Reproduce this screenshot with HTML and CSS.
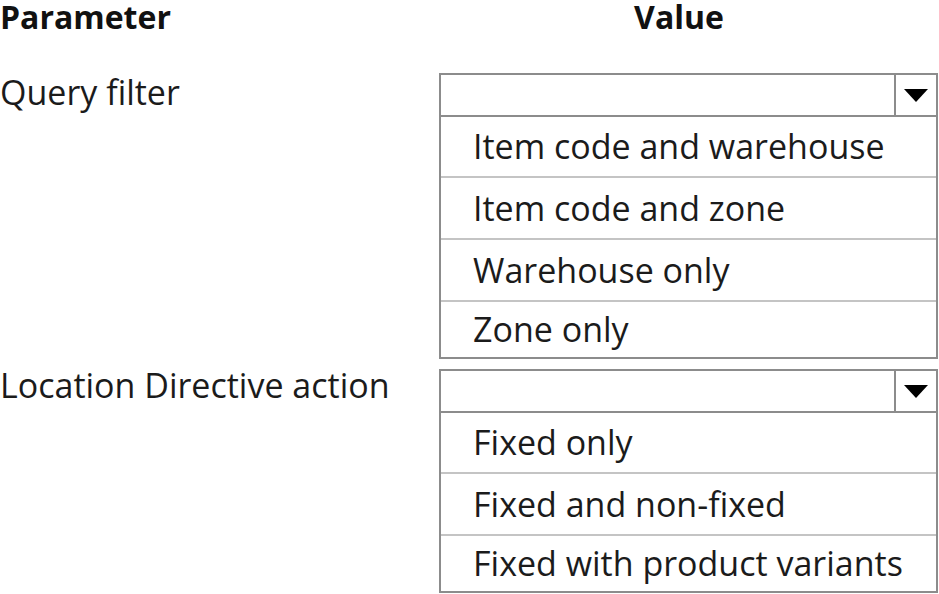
FILE: index.html
```html
<!DOCTYPE html>
<html lang="en">
<head>
    <meta charset="UTF-8">
    <meta name="viewport" content="width=device-width, initial-scale=1.0">
    <title>Parameter values</title>
    <link rel="stylesheet" href="styles.css">
</head>
<body>
    <div class="sheet">
        <div class="head-row">
            <div class="head-param">Parameter</div>
            <div class="head-value">Value</div>
        </div>

        <div class="param-row">
            <div class="param-label">Query filter</div>
            <div class="picker">
                <div class="select">
                    <span class="select-field"></span>
                    <span class="select-btn">
                        <svg width="24" height="13" viewBox="0 0 24 13"><path d="M0 0 H24 L12 13 Z" fill="#000"/></svg>
                    </span>
                </div>
                <ul class="options">
                    <li>Item code and warehouse</li>
                    <li>Item code and zone</li>
                    <li>Warehouse only</li>
                    <li>Zone only</li>
                </ul>
            </div>
        </div>

        <div class="param-row">
            <div class="param-label">Location Directive action</div>
            <div class="picker">
                <div class="select">
                    <span class="select-field"></span>
                    <span class="select-btn">
                        <svg width="24" height="13" viewBox="0 0 24 13"><path d="M0 0 H24 L12 13 Z" fill="#000"/></svg>
                    </span>
                </div>
                <ul class="options">
                    <li>Fixed only</li>
                    <li>Fixed and non-fixed</li>
                    <li>Fixed with product variants</li>
                </ul>
            </div>
        </div>
    </div>
</body>
</html>
```

FILE: styles.css
```css
body {
    margin: 0;
    background: #fff;
    color: #1b1b1b;
    font-family: "Open Sans", "Noto Sans", sans-serif;
}
.sheet {
    width: 939px;
}
.head-row {
    display: grid;
    grid-template-columns: 439px 500px;
    height: 73px;
}
.head-param,
.head-value {
    font-weight: 700;
    font-size: 32px;
    line-height: 40px;
    margin-top: -3px;
    color: #111;
}
.head-value {
    text-align: center;
    padding-right: 20px;
}
.param-row {
    display: grid;
    grid-template-columns: 439px 499px;
    margin-bottom: 10px;
}
.param-label {
    font-size: 34px;
    line-height: 38px;
}
.param-row + .param-row .param-label {
    margin-top: -3px;
}
.picker {
    display: flex;
    flex-direction: column;
}
.select {
    display: flex;
    height: 40px;
    border: 2px solid #8c8c8c;
}
.select-field {
    flex: 1;
}
.select-btn {
    width: 40px;
    border-left: 2px solid #8c8c8c;
    display: flex;
    align-items: center;
    justify-content: center;
}
.options {
    list-style: none;
    margin: 0;
    padding: 0;
    border: 2px solid #8c8c8c;
    border-top: none;
}
.options li {
    height: 60px;
    line-height: 60px;
    padding-left: 32px;
    font-size: 34px;
    border-top: 2px solid #c4c4c4;
}
.options li:first-child {
    height: 59px;
    line-height: 59px;
    border-top: none;
}
.options li:last-child {
    height: 55px;
    line-height: 55px;
}
```
